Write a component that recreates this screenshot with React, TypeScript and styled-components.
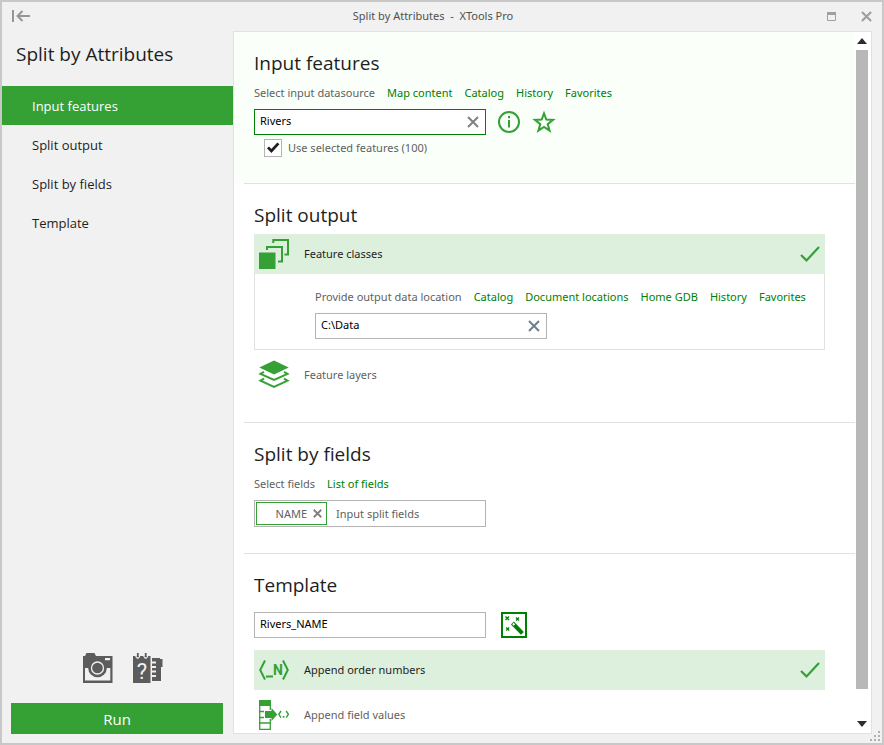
import React from "react";
import styled, { createGlobalStyle } from "styled-components";

const c = {
  accent: "#35a135",
  link: "#008000",
  chrome: "#f1f1f1",
  line: "#e1e1e1",
  field: "#b4b4b4",
  muted: "#5f5f5f",
  tint: "#ddf0dd",
  icon: "#5c5c5c",
};

const Global = createGlobalStyle`
  * { box-sizing: border-box; }
  body { margin: 0; font-family: "Noto Sans", "Open Sans", sans-serif; font-size: 11px; line-height: 16px; color: #1e1e1e; }
  button, input { font: inherit; color: inherit; }
  button { padding: 0; border: 0; background: none; cursor: pointer; }
  svg { display: block; flex: none; overflow: visible; }
`;

const Window = styled.div`
  display: grid;
  grid-template-columns: 231px minmax(0, 1fr);
  grid-template-rows: 29px minmax(0, 1fr);
  height: 100vh;
  border: 2px solid #c8c8c8;
  background: ${c.chrome};
`;

const TitleBar = styled.header`
  grid-column: 1 / -1;
  display: grid;
  grid-template-columns: 80px 1fr 80px;
  align-items: center;
  padding: 0 10px 1px;
`;

const WindowTitle = styled.div`
  text-align: center;
  white-space: pre;
  color: #505050;
  padding-right: 18px;
`;

const WindowButtons = styled.div`
  display: flex;
  justify-content: flex-end;
  align-items: center;
  gap: 25px;
`;

const Sidebar = styled.aside`
  display: flex;
  flex-direction: column;
  min-height: 0;
`;

const SideTitle = styled.h1`
  margin: 9px 14px 18px;
  font-family: "Open Sans", sans-serif;
  font-size: 19px;
  line-height: 28px;
  font-weight: 400;
`;

const NavLink = styled.a<{ $active?: boolean }>`
  display: block;
  padding: 2px 0 0 30px;
  font-family: "Open Sans", sans-serif;
  font-size: 13px;
  line-height: 37px;
  text-decoration: none;
  color: ${(p) => (p.$active ? "#fff" : "#1e1e1e")};
  background: ${(p) => (p.$active ? c.accent : "transparent")};
`;

const Tools = styled.div`
  display: flex;
  justify-content: center;
  gap: 20px;
  margin: auto 0 20px;
  padding-left: 10px;
`;

const RunButton = styled.button`
  margin: 0 10px 9px 9px;
  padding-top: 2px;
  background: ${c.accent};
  color: #fff;
  font-family: "Open Sans", sans-serif;
  font-size: 15px;
  line-height: 29px;
`;

const Panel = styled.main`
  display: flex;
  margin: 0 10px 9px 0;
  border: 1px solid ${c.line};
  background: #fff;
  min-height: 0;
`;

const Scroller = styled.div`
  flex: 1;
  min-width: 0;
  overflow: auto;
  scrollbar-width: none;
`;

const ScrollBar = styled.div`
  width: 16px;
  padding: 6px 3px 6px 1px;
  display: flex;
  flex-direction: column;
  align-items: center;
`;

const Thumb = styled.div`
  flex: 1;
  width: 12px;
  margin: 6px 0 32px;
  background: #b8b8b8;
`;

const Section = styled.section<{ $current?: boolean }>`
  padding: 17px 30px 0 20px;
  background: ${(p) => (p.$current ? "#fafffa" : "#fff")};
`;

const Divider = styled.hr<{ $gap?: number }>`
  margin: ${(p) => p.$gap ?? 26}px -30px 0 -10px;
  border: 0;
  border-top: 1px solid ${c.line};
`;

const Heading = styled.h2<{ $gap: number }>`
  margin: 0 0 ${(p) => p.$gap}px;
  font-family: "Open Sans", sans-serif;
  font-size: 19px;
  line-height: 28px;
  font-weight: 400;
`;

const Hints = styled.div`
  display: flex;
  flex-wrap: wrap;
  gap: 8px 12px;
  margin-bottom: 8px;
  color: ${c.muted};
`;

const HintLink = styled.a`
  color: ${c.link};
  text-decoration: none;
`;

const FieldRow = styled.div`
  display: flex;
  align-items: center;
`;

const Field = styled.div<{ $focus?: boolean }>`
  display: flex;
  align-items: center;
  width: 232px;
  height: 26px;
  padding: 0 6px 0 5px;
  border: 1px solid ${(p) => (p.$focus ? c.link : c.field)};
  background: #fff;
`;

const TokenField = styled(Field)`
  height: 27px;
  padding: 1px;
`;

const Text = styled.input`
  flex: 1;
  min-width: 0;
  height: 24px;
  padding: 0 0 3px;
  border: 0;
  outline: 0;
  background: none;
  color: #000;
  &::placeholder { color: ${c.muted}; opacity: 1; }
`;

const TokenText = styled(Text)`
  padding: 0 9px;
`;

const Token = styled.span`
  display: flex;
  align-items: center;
  justify-content: flex-end;
  gap: 6px;
  width: 71px;
  height: 23px;
  padding-right: 4px;
  border: 1px solid ${c.accent};
  color: ${c.muted};
`;

const FieldIcons = styled.div`
  display: flex;
  gap: 12px;
  margin-left: 12px;
`;

const CheckLabel = styled.label`
  display: flex;
  align-items: center;
  gap: 6px;
  margin: 4px 0 0 10px;
  color: ${c.muted};
`;

const CheckBox = styled.input`
  appearance: none;
  width: 18px;
  height: 18px;
  margin: 0;
  border: 1px solid ${c.field};
  background: #fff;
  &:checked {
    background: #fff url("data:image/svg+xml,%3Csvg xmlns='http://www.w3.org/2000/svg' viewBox='0 0 16 16'%3E%3Cpath d='M3 7.4 6.4 11 13.4 3.4' fill='none' stroke='%231e1e1e' stroke-width='2.8'/%3E%3C/svg%3E");
  }
`;

const Option = styled.button<{ $on?: boolean }>`
  display: flex;
  align-items: center;
  gap: 15px;
  width: 100%;
  height: 40px;
  padding: 0 5px;
  text-align: left;
  color: ${(p) => (p.$on ? "#1e1e1e" : c.muted)};
  background: ${(p) => (p.$on ? c.tint : "transparent")};
  & + & { margin-top: 5px; }
`;

const OptionName = styled.span`
  flex: 1;
`;

const OptionBody = styled.div`
  margin-bottom: 5px;
  padding: 15px 10px 10px 60px;
  border: 1px solid ${c.line};
  border-top: 0;
`;

const WandButton = styled.button`
  width: 26px;
  height: 26px;
  margin-left: 15px;
  border: 2px solid ${c.link};
  background: #fff;
`;

const TemplateRow = styled(FieldRow)`
  margin-bottom: 12px;
`;

const Grip = styled.div`
  position: absolute;
  right: 4px;
  bottom: 4px;
`;

const Cross = ({ size = 12, width = 2, color = "#808080" }) => (
  <svg width={size} height={size} viewBox="0 0 12 12">
    <path d="M1 1 11 11M11 1 1 11" stroke={color} strokeWidth={width} />
  </svg>
);

const Tick = () => (
  <svg width="20" height="16" viewBox="0 0 20 16">
    <path d="M1 9 6.5 14.4 19 1" fill="none" stroke={c.accent} strokeWidth="2.2" />
  </svg>
);

const CollapseIcon = () => (
  <svg width="18" height="12" viewBox="0 0 18 12">
    <path d="M1 0V12M5 6H18M10.5 1 5.5 6 10.5 11" fill="none" stroke="#969696" strokeWidth="2" />
  </svg>
);

const MaximizeIcon = () => (
  <svg width="9" height="9" viewBox="0 0 9 9">
    <path d="M.5 .5H8.5V8.5H.5Z" fill="none" stroke="#a0a0a0" />
    <path d="M0 0H9V3H0Z" fill="#a0a0a0" />
  </svg>
);

const InfoIcon = () => (
  <svg width="22" height="22" viewBox="0 0 22 22">
    <circle cx="11" cy="11" r="10" fill="none" stroke={c.accent} strokeWidth="2" />
    <path d="M10 5H12V7.2H10ZM10 9H12V16.5H10Z" fill={c.accent} />
  </svg>
);

const StarIcon = () => (
  <svg width="24" height="24" viewBox="0 0 24 24">
    <path
      d="M12 3.4 14.3 9.6 21 9.9 15.7 14.1 17.6 20.6 12 16.9 6.4 20.6 8.3 14.1 3 9.9 9.7 9.6Z"
      fill="none"
      stroke={c.accent}
      strokeWidth="2"
    />
  </svg>
);

const ClassesIcon = () => (
  <svg width="30" height="30" viewBox="0 0 30 30" fill="none" stroke={c.accent} strokeWidth="2">
    <path d="M0 13.5H16.5V30H0Z" fill={c.accent} stroke="none" />
    <path d="M8 11V8H23V22.5H19M14.3 4V1H29V15.5H25.5" />
  </svg>
);

const LayersIcon = () => (
  <svg width="30" height="30" viewBox="0 0 30 30">
    <path d="M15 .4 29.7 7.4 15 14.4 .3 7.4Z" fill={c.accent} />
    <path
      d="M5 11.8 1.5 13.8 15 20 28.5 13.8 25 11.8M5 18.7 1.5 20.7 15 26.9 28.5 20.7 25 18.7"
      fill="none"
      stroke={c.accent}
      strokeWidth="2"
    />
  </svg>
);

const OrderIcon = () => (
  <svg width="30" height="20" viewBox="0 0 30 20">
    <path d="M6 .5 1.2 10 6 19.5M24 .5 28.8 10 24 19.5" fill="none" stroke={c.accent} strokeWidth="2" />
    <path d="M7 15.5H14V17.5H7Z" fill={c.accent} />
    <text x="14" y="14.5" fill={c.accent} fontFamily="Roboto, sans-serif" fontWeight="700" fontSize="14">
      N
    </text>
  </svg>
);

const ValuesIcon = () => (
  <svg width="30" height="30" viewBox="0 0 30 30">
    <path d="M0 0H12V6H0Z" fill={c.accent} />
    <path d="M.7 5V29.3H11.3V5M0 11.5H11M0 17.5H11M0 23H11" fill="none" stroke={c.accent} strokeWidth="1.3" />
    <path d="M5 10H12V6L19.5 14.5 12 23V19H5Z" fill="#fff" />
    <path d="M6 11H12.5V8L18.3 14.5 12.5 21V18H6Z" fill={c.accent} />
    <path d="M22 11 19.8 14.3 22 17.6M27.2 11 29.4 14.3 27.2 17.6" fill="none" stroke={c.accent} strokeWidth="1.4" />
    <path d="M23.7 16H25.5V17.6H23.7Z" fill={c.accent} />
  </svg>
);

const WandIcon = () => (
  <svg width="22" height="22" viewBox="0 0 22 22" stroke={c.link} fill="none">
    <path d="M2.5 2.5 6 6M6 2.5 2.5 6M13 3.5 16 6.5M16 3.5 13 6.5M3.2 13.5 6.2 16.5M6.2 13.5 3.2 16.5" strokeWidth="1.3" />
    <path d="M9.4 9 19.4 19.4" strokeWidth="4" />
    <path d="M9.9 9.5 11.4 11" stroke="#fff" strokeWidth="2" />
  </svg>
);

const CameraIcon = () => (
  <svg width="30" height="30" viewBox="0 0 30 30">
    <path d="M0 3H2L3.5 0H11.5L13 3H29.5V30H0Z" fill={c.icon} />
    <path d="M2 15H27.3V27.5H2ZM22 5H27V7.2H22Z" fill={c.chrome} />
    <circle cx="14.5" cy="15" r="9.3" fill={c.icon} />
    <circle cx="14.5" cy="15" r="6" fill="none" stroke={c.chrome} strokeWidth="1.3" />
  </svg>
);

const HelpIcon = () => (
  <svg width="30" height="30" viewBox="0 0 30 30">
    <path d="M0 3H17.5V30H0ZM19 5H27V6H29.5V14H28V28H19Z" fill={c.icon} />
    <path d="M19 9.5H23M19 14H23M19 18.5H23M19 23H23" stroke={c.chrome} strokeWidth="1.8" />
    <path d="M3 2V3.5Q4.8 7 6.5 3.5V2M11 2V3.5Q12.7 7 14.5 3.5V2" fill="none" stroke={c.chrome} strokeWidth="1.3" />
    <path d="M4.8 0V4M12.7 0V4" stroke={c.icon} strokeWidth="1.8" />
    <text x="9" y="26" textAnchor="middle" fill={c.chrome} fontFamily="Roboto, sans-serif" fontWeight="400" fontSize="22">
      ?
    </text>
  </svg>
);

const Arrow = ({ down = false }) => (
  <svg width="10" height="6" viewBox="0 0 10 6">
    <path d={down ? "M0 0H10L5 6Z" : "M0 6H10L5 0Z"} fill="#2d2d2d" />
  </svg>
);

const HintRow = ({ label, htmlFor, links }: { label: string; htmlFor: string; links: string[] }) => (
  <Hints>
    <label htmlFor={htmlFor}>{label}</label>
    {links.map((l) => (
      <HintLink key={l} href="#">
        {l}
      </HintLink>
    ))}
  </Hints>
);

const nav = [
  ["Input features", "input"],
  ["Split output", "output"],
  ["Split by fields", "fields"],
  ["Template", "template"],
];

export default function App() {
  return (
    <>
      <Global />
      <Window>
        <TitleBar>
          <button aria-label="Collapse menu"><CollapseIcon /></button>
          <WindowTitle>{"Split by Attributes  -  XTools Pro"}</WindowTitle>
          <WindowButtons>
            <button aria-label="Maximize"><MaximizeIcon /></button>
            <button aria-label="Close"><Cross size={11} width={2.4} color="#a0a0a0" /></button>
          </WindowButtons>
        </TitleBar>

        <Sidebar>
          <SideTitle>Split by Attributes</SideTitle>
          <nav>
            {nav.map(([name, id], i) => (
              <NavLink key={id} href={"#" + id} $active={i === 0}>
                {name}
              </NavLink>
            ))}
          </nav>
          <Tools>
            <button aria-label="Snapshot"><CameraIcon /></button>
            <button aria-label="Help"><HelpIcon /></button>
          </Tools>
          <RunButton>Run</RunButton>
        </Sidebar>

        <Panel>
          <Scroller>
            <Section id="input" $current>
              <Heading $gap={8}>Input features</Heading>
              <HintRow label="Select input datasource" htmlFor="source" links={["Map content", "Catalog", "History", "Favorites"]} />
              <FieldRow>
                <Field $focus>
                  <Text id="source" defaultValue="Rivers" />
                  <button aria-label="Clear datasource"><Cross /></button>
                </Field>
                <FieldIcons>
                  <button aria-label="Information"><InfoIcon /></button>
                  <button aria-label="Add to favorites"><StarIcon /></button>
                </FieldIcons>
              </FieldRow>
              <CheckLabel>
                <CheckBox type="checkbox" defaultChecked />
                Use selected features (100)
              </CheckLabel>
              <Divider />
            </Section>

            <Section id="output">
              <Heading $gap={5}>Split output</Heading>
              <Option $on aria-pressed="true">
                <ClassesIcon />
                <OptionName>Feature classes</OptionName>
                <Tick />
              </Option>
              <OptionBody>
                <HintRow
                  label="Provide output data location"
                  htmlFor="location"
                  links={["Catalog", "Document locations", "Home GDB", "History", "Favorites"]}
                />
                <Field>
                  <Text id="location" defaultValue="C:\Data" />
                  <button aria-label="Clear location"><Cross color="#6f7f8c" /></button>
                </Field>
              </OptionBody>
              <Option aria-pressed="false">
                <LayersIcon />
                <OptionName>Feature layers</OptionName>
              </Option>
              <Divider $gap={27} />
            </Section>

            <Section id="fields">
              <Heading $gap={8}>Split by fields</Heading>
              <HintRow label="Select fields" htmlFor="split-fields" links={["List of fields"]} />
              <TokenField>
                <Token>
                  NAME
                  <button aria-label="Remove NAME"><Cross size={9} width={2.4} /></button>
                </Token>
                <TokenText id="split-fields" placeholder="Input split fields" />
              </TokenField>
              <Divider />
            </Section>

            <Section id="template">
              <Heading $gap={13}>Template</Heading>
              <TemplateRow>
                <Field>
                  <Text aria-label="Template" defaultValue="Rivers_NAME" />
                </Field>
                <WandButton aria-label="Template wizard"><WandIcon /></WandButton>
              </TemplateRow>
              <Option $on aria-pressed="true">
                <OrderIcon />
                <OptionName>Append order numbers</OptionName>
                <Tick />
              </Option>
              <Option aria-pressed="false">
                <ValuesIcon />
                <OptionName>Append field values</OptionName>
              </Option>
            </Section>
          </Scroller>
          <ScrollBar>
            <Arrow />
            <Thumb />
            <Arrow down />
          </ScrollBar>
        </Panel>
        <Grip>
          <svg width="10" height="10" viewBox="0 0 10 10">
            <path d="M8 0H10V2H8ZM4 4H6V6H4ZM8 4H10V6H8ZM0 8H2V10H0ZM4 8H6V10H4ZM8 8H10V10H8Z" fill="#b0b0b0" />
          </svg>
        </Grip>
      </Window>
    </>
  );
}
